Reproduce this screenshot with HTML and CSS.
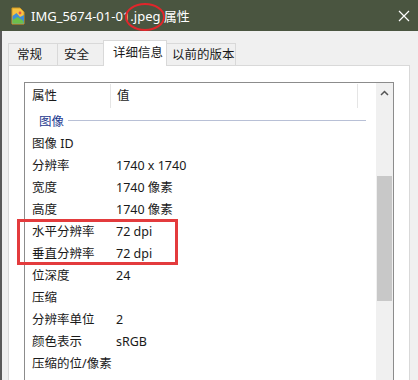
FILE: index.html
```html
<!DOCTYPE html>
<html lang="zh-CN">

<head>
    <meta charset="UTF-8">
    <meta name="viewport" content="width=device-width, initial-scale=1.0">
    <title>IMG_5674-01-01.jpeg 属性</title>
    <link rel="stylesheet" href="styles.css">
</head>

<body>
    <div class="titlebar">
        <svg class="file-icon" width="14" height="18" viewBox="0 0 14 18">
            <path d="M1 1h8l4 4v12H1z" fill="#f6c343" stroke="#d39a20" stroke-width="1"/>
            <path d="M1.5 9l4 -3 3.5 4 4 -2v8.5H1.5z" fill="#3f8fd8"/>
            <path d="M1.5 13l5 -3 6 4v2.5H1.5z" fill="#6cc04a"/>
            <circle cx="9" cy="6" r="1.4" fill="#e8554e"/>
        </svg>
        <span class="title-text">IMG_5674-01-01.jpeg 属性</span>
        <svg class="mark-ellipse" width="42" height="30" viewBox="0 0 42 30">
            <ellipse cx="21" cy="15" rx="19" ry="13" fill="none" stroke="#e0262b" stroke-width="2"/>
        </svg>
        <svg class="close" width="12" height="12" viewBox="0 0 12 12">
            <path d="M1 1l10 10M11 1L1 11" stroke="#fff" stroke-width="1.2"/>
        </svg>
    </div>

    <div class="window">
        <div class="tabs">
            <div class="tab tab-general">常规</div>
            <div class="tab tab-security">安全</div>
            <div class="tab tab-details active">详细信息</div>
            <div class="tab tab-versions">以前的版本</div>
        </div>

        <div class="panel">
            <div class="listbox">
                <div class="list">
                    <div class="head">
                        <div class="col-name">属性</div>
                        <div class="col-value">值</div>
                    </div>
                    <div class="group"><span>图像</span></div>
                    <div class="row"><div class="col-name">图像 ID</div><div class="col-value"></div></div>
                    <div class="row"><div class="col-name">分辨率</div><div class="col-value">1740 x 1740</div></div>
                    <div class="row"><div class="col-name">宽度</div><div class="col-value">1740 像素</div></div>
                    <div class="row"><div class="col-name">高度</div><div class="col-value">1740 像素</div></div>
                    <div class="row"><div class="col-name">水平分辨率</div><div class="col-value">72 dpi</div></div>
                    <div class="row"><div class="col-name">垂直分辨率</div><div class="col-value">72 dpi</div></div>
                    <div class="row"><div class="col-name">位深度</div><div class="col-value">24</div></div>
                    <div class="row"><div class="col-name">压缩</div><div class="col-value"></div></div>
                    <div class="row"><div class="col-name">分辨率单位</div><div class="col-value">2</div></div>
                    <div class="row"><div class="col-name">颜色表示</div><div class="col-value">sRGB</div></div>
                    <div class="row"><div class="col-name">压缩的位/像素</div><div class="col-value"></div></div>
                </div>
                <div class="scrollbar">
                    <svg class="arrow" width="9" height="6" viewBox="0 0 9 6">
                        <path d="M1 5l3.5 -3.5L8 5" fill="none" stroke="#555" stroke-width="1.5"/>
                    </svg>
                    <div class="thumb"></div>
                </div>
            </div>
            <div class="highlight"></div>
        </div>
    </div>
</body>

</html>
```

FILE: styles.css
```css
body {
    margin: 0;
    width: 418px;
    height: 380px;
    overflow: hidden;
    font-family: "Noto Sans", "Noto Sans CJK SC", sans-serif;
    font-size: 12.5px;
    color: #1a1a1a;
    background-color: #f0f0f0;
}

.titlebar {
    position: relative;
    height: 31px;
    background-color: #4a5540;
    color: #fff;
    display: flex;
    align-items: center;
    padding-left: 11px;
}

.file-icon {
    margin-right: 6px;
}

.title-text {
    font-size: 13px;
}

.mark-ellipse {
    position: absolute;
    left: 124px;
    top: 2px;
}

.close {
    position: absolute;
    right: 8px;
    top: 10px;
}

.window {
    position: relative;
    box-sizing: border-box;
    height: 349px;
    overflow: hidden;
    border-left: 2px solid #5a5a5a;
    padding: 7px 8px 0 6px;
}

.tabs {
    display: flex;
    align-items: flex-end;
    height: 28px;
}

.tab {
    box-sizing: border-box;
    height: 23px;
    line-height: 22px;
    white-space: nowrap;
    background-color: #f0f0f0;
    border: 1px solid #d9d9d9;
    border-bottom: none;
    margin-right: -1px;
}

.tab-general {
    width: 50px;
    padding-left: 8px;
}

.tab-security {
    width: 47px;
    padding-left: 6px;
    border-right: none;
}

.tab-details {
    width: 64px;
    padding-left: 9px;
}

.tab-versions {
    width: 70px;
    padding-left: 6px;
    border-left: none;
}

.tab.active {
    position: relative;
    height: 26px;
    line-height: 24px;
    background-color: #fff;
    z-index: 1;
}

.panel {
    position: relative;
    height: 320px;
    background-color: #fff;
    border: 1px solid #d9d9d9;
    padding: 16px 15px 0 15px;
    margin-top: -1px;
}

.listbox {
    display: flex;
    height: 310px;
    border: 1px solid #8c8c8c;
    border-bottom: none;
}

.list {
    flex: 1;
}

.head, .row {
    display: flex;
    white-space: nowrap;
}

.head {
    height: 25px;
    align-items: center;
}

.head .col-name, .head .col-value {
    border-right: 1px solid #e5e5e5;
    height: 24px;
    line-height: 24px;
}

.head .col-value {
    width: 240px;
}

.col-name {
    width: 78px;
    padding-left: 7px;
}

.col-value {
    padding-left: 6px;
}

.group {
    height: 25px;
    display: flex;
    align-items: center;
    padding-left: 14px;
    color: #1e3a8f;
}

.group::after {
    content: "";
    flex: 1;
    height: 1px;
    background-color: #b8c0d6;
    margin: 0 10px 0 4px;
}

.row {
    height: 22px;
    line-height: 22px;
}

.scrollbar {
    width: 17px;
    background-color: #f0f0f0;
    position: relative;
}

.arrow {
    position: absolute;
    left: 4px;
    top: 7px;
}

.thumb {
    position: absolute;
    left: 1px;
    right: 1px;
    top: 93px;
    height: 125px;
    background-color: #c8c8c8;
}

.highlight {
    position: absolute;
    left: 8px;
    top: 153px;
    width: 155px;
    height: 40px;
    border: 3px solid #e33b3d;
}
```
